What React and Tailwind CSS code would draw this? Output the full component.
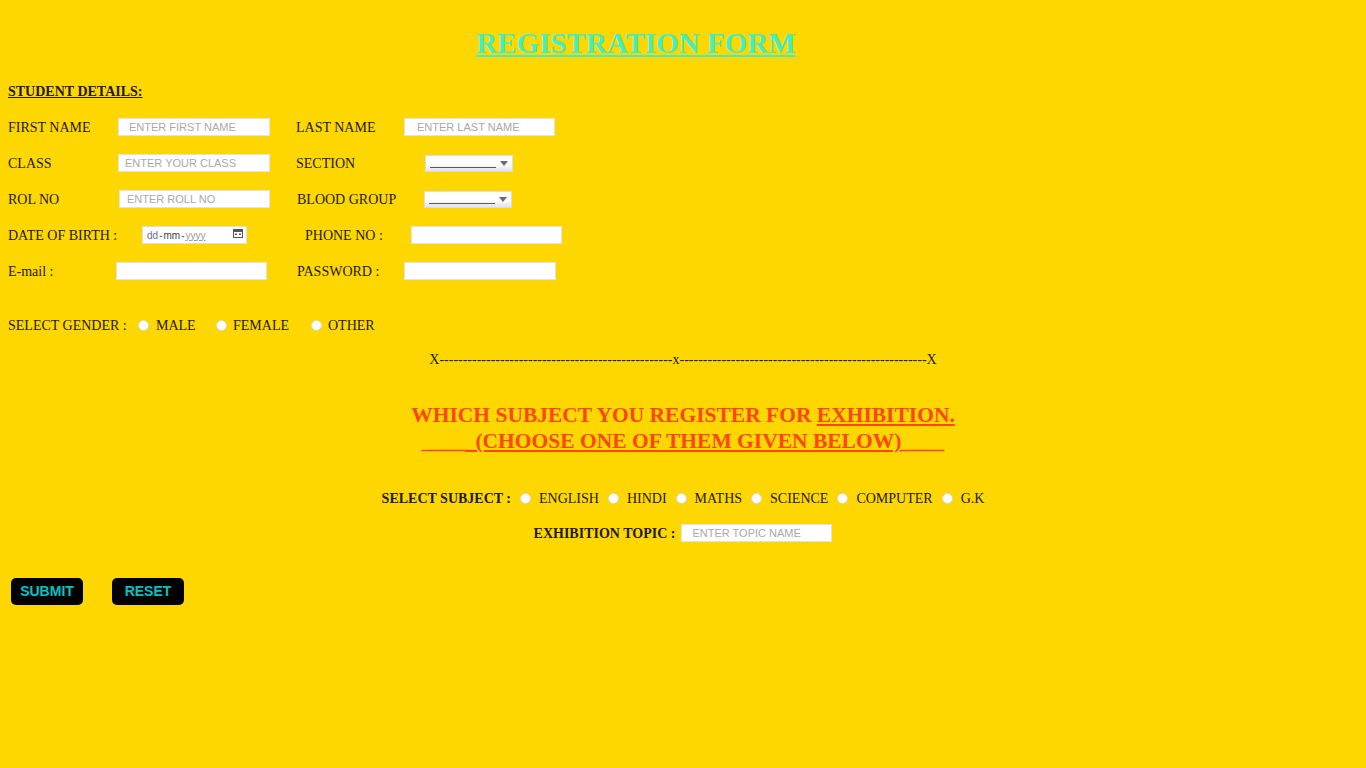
import React from "react";

const serif = "font-['Liberation_Serif','Times_New_Roman',serif]";
const sans = "font-['Liberation_Sans',Arial,sans-serif]";

function TextBox({ width = "w-[152px]", pad = "pl-[10px]", placeholder = "", type = "text" }) {
  return (
    <input
      type={type}
      placeholder={placeholder}
      className={`h-[18px] ${width} ${pad} bg-white border border-[#e2e2e2] text-[11px] ${sans} text-[#333] placeholder:text-[#a9a9a9] outline-none`}
    />
  );
}

// old style select with an empty option
function SelectBox() {
  return (
    <div className="relative h-[17px] w-[88px] border border-[#dcdcdc] bg-gradient-to-b from-white via-white to-[#e4e4e4] flex items-end">
      <div className="ml-[4px] mb-[3px] h-[1px] w-[66px] bg-[#5a5a5a]"></div>
      <div className="absolute right-[1px] top-[1px] bottom-[1px] w-[14px] flex items-center justify-center">
        <svg width="8" height="5" viewBox="0 0 8 5">
          <path d="M0 0 L8 0 L4 5 Z" fill="#6b6b6b" />
        </svg>
      </div>
    </div>
  );
}

function DateBox() {
  return (
    <div className={`h-[18px] w-[105px] bg-white border border-[#dedede] flex items-center pl-[4px] pr-[3px] text-[10px] ${sans}`}>
      <span className="text-[#6a6f8a]">dd</span>
      <span className="text-[#555] mx-[1px]">-</span>
      <span className="text-[#444]">mm</span>
      <span className="text-[#555] mx-[1px]">-</span>
      <span className="text-[#9a9a9a] underline">yyyy</span>
      <svg className="ml-auto mb-[4px]" width="10" height="10" viewBox="0 0 10 10">
        <rect x="0.5" y="1.5" width="9" height="8" fill="none" stroke="#555" />
        <rect x="0.5" y="1.5" width="9" height="2.5" fill="#555" />
        <rect x="2" y="5.5" width="2" height="1.5" fill="#555" />
        <rect x="6" y="5.5" width="2" height="1.5" fill="#555" />
      </svg>
    </div>
  );
}

function Radio() {
  return <span className="inline-block h-[11px] w-[11px] shrink-0 rounded-full bg-white border border-[#d6d6d6]"></span>;
}

export default function App() {
  const subjects = ["ENGLISH", "HINDI", "MATHS", "SCIENCE", "COMPUTER", "G.K"];

  return (
    <div className={`min-h-screen bg-[#ffd700] ${serif} text-[14px] text-[#1e1900] px-2 pb-10`}>
      {/* TITLE */}
      <div className="w-[1256px] text-center pt-[26px]">
        <h1 className="inline-block text-[29px] leading-[34px] font-bold underline text-[#44eec2]">
          REGISTRATION FORM
        </h1>
      </div>

      <div className="mt-[23px] font-bold underline leading-[18px]">STUDENT DETAILS:</div>

      {/* STUDENT ROWS */}
      <div className="mt-[8px] flex flex-col">
        <div className="h-[36px] flex items-center">
          <span className="w-[110px]">FIRST NAME</span>
          <TextBox placeholder="ENTER FIRST NAME" pad="pl-[10px]" />
          <span className="ml-[26px] w-[108px]">LAST NAME</span>
          <TextBox width="w-[151px]" placeholder="ENTER LAST NAME" pad="pl-[12px]" />
        </div>
        <div className="h-[36px] flex items-center">
          <span className="w-[110px]">CLASS</span>
          <TextBox placeholder="ENTER YOUR CLASS" pad="pl-[6px]" />
          <span className="ml-[26px] w-[129px]">SECTION</span>
          <SelectBox />
        </div>
        <div className="h-[36px] flex items-center">
          <span className="w-[111px]">ROL NO</span>
          <TextBox width="w-[151px]" placeholder="ENTER ROLL NO" pad="pl-[7px]" />
          <span className="ml-[27px] w-[127px]">BLOOD GROUP</span>
          <SelectBox />
        </div>
        <div className="h-[36px] flex items-center">
          <span className="w-[134px]">DATE OF BIRTH :</span>
          <DateBox />
          <span className="ml-[58px] w-[106px]">PHONE NO :</span>
          <TextBox width="w-[151px]" />
        </div>
        <div className="h-[36px] flex items-center">
          <span className="w-[108px]">E-mail :</span>
          <TextBox width="w-[151px]" />
          <span className="ml-[30px] w-[107px]">PASSWORD :</span>
          <TextBox type="password" />
        </div>
      </div>

      {/* GENDER */}
      <div className="mt-[18px] h-[36px] flex items-center">
        <span className="w-[130px]">SELECT GENDER :</span>
        <Radio />
        <span className="ml-[7px] w-[60px]">MALE</span>
        <Radio />
        <span className="ml-[6px] w-[78px]">FEMALE</span>
        <Radio />
        <span className="ml-[6px]">OTHER</span>
      </div>

      <div className="mt-[7px] h-[20px] leading-[20px] text-center w-[1350px] whitespace-nowrap">
        {"X" + "-".repeat(50) + "x" + "-".repeat(53) + "X"}
      </div>

      {/* EXHIBITION HEADING */}
      <div className="mt-[32px] w-[1350px] text-center font-bold text-[21.5px] leading-[26px] text-[#ff4500]">
        <div>
          WHICH SUBJECT YOU REGISTER FOR <u>EXHIBITION.</u>
        </div>
        <div>
          ____<u>_(CHOOSE ONE OF THEM GIVEN BELOW)</u>____
        </div>
      </div>

      {/* SUBJECTS */}
      <div className="mt-[34px] w-[1350px] h-[20px] flex items-center justify-center">
        <span className="font-bold">SELECT SUBJECT :</span>
        {subjects.map((s) => (
          <React.Fragment key={s}>
            <span className="ml-[9px] flex">
              <Radio />
            </span>
            <span className="ml-[8px]">{s}</span>
          </React.Fragment>
        ))}
      </div>

      <div className="mt-[15px] w-[1350px] h-[20px] flex items-center justify-center">
        <span className="font-bold">EXHIBITION TOPIC :</span>
        <span className="ml-[6px] flex">
          <TextBox width="w-[151px]" placeholder="ENTER TOPIC NAME" pad="pl-[10px]" />
        </span>
      </div>

      {/* BUTTONS */}
      <div className={`mt-[35px] ml-[3px] flex gap-[29px] ${sans}`}>
        <button className="h-[27px] w-[72px] rounded-[5px] bg-black text-[14px] font-bold text-[#00c4c4]">
          SUBMIT
        </button>
        <button className="h-[27px] w-[72px] rounded-[5px] bg-black text-[14px] font-bold text-[#00c4c4]">
          RESET
        </button>
      </div>
    </div>
  );
}
